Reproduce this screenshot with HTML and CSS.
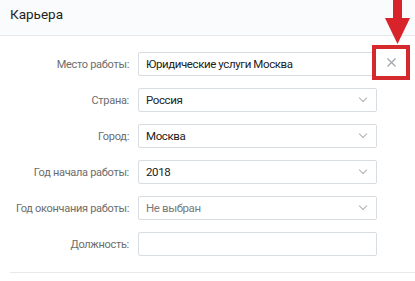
FILE: index.html
```html
<!DOCTYPE html>
<html lang="ru">
<head>
    <meta charset="UTF-8">
    <title>Карьера</title>
    <link rel="stylesheet" href="styles.css">
</head>
<body>
    <div class="page">
        <div class="header">Карьера</div>

        <div class="form">
            <div class="row">
                <div class="label">Место работы:</div>
                <div class="field">
                    <span class="value">Юридические услуги Москва</span>
                    <div class="clear-box">
                        <svg width="9" height="9" viewBox="0 0 9 9">
                            <path d="M0.5 0.5 L8.5 8.5 M8.5 0.5 L0.5 8.5" stroke="#9ea3aa" stroke-width="1.1" fill="none"/>
                        </svg>
                    </div>
                </div>
            </div>
            <div class="row">
                <div class="label">Страна:</div>
                <div class="field select"><span class="value">Россия</span><span class="chevron"></span></div>
            </div>
            <div class="row">
                <div class="label">Город:</div>
                <div class="field select"><span class="value">Москва</span><span class="chevron"></span></div>
            </div>
            <div class="row">
                <div class="label">Год начала работы:</div>
                <div class="field select"><span class="value">2018</span><span class="chevron"></span></div>
            </div>
            <div class="row">
                <div class="label">Год окончания работы:</div>
                <div class="field select"><span class="value muted">Не выбран</span><span class="chevron"></span></div>
            </div>
            <div class="row">
                <div class="label">Должность:</div>
                <div class="field"></div>
            </div>
        </div>

        <div class="divider"></div>

        <svg class="arrow" width="26" height="45" viewBox="0 0 26 45">
            <rect x="8" y="0" width="9" height="22" fill="#d8232a"/>
            <polygon points="0,18 25,18 12.5,44" fill="#d8232a"/>
        </svg>
    </div>
</body>
</html>
```

FILE: styles.css
```css
body {
    margin: 0;
    font-family: Roboto, "Liberation Sans", sans-serif;
    background: #fff;
}
.page {
    position: relative;
    width: 415px;
    height: 281px;
    overflow: hidden;
}
.header {
    height: 35px;
    line-height: 29px;
    padding-left: 10px;
    font-size: 13.5px;
    color: #222;
    background: #fafbfc;
    border-bottom: 1px solid #e7e8ec;
}
.form {
    padding-top: 16px;
    display: flex;
    flex-direction: column;
    gap: 12px;
}
.row {
    display: flex;
    align-items: center;
    gap: 9px;
}
.label {
    flex: none;
    width: 129px;
    text-align: right;
    white-space: nowrap;
    font-size: 11px;
    letter-spacing: -0.3px;
    color: #6d6d6d;
}
.field {
    position: relative;
    flex: none;
    width: 237px;
    height: 22px;
    border: 1px solid #d8dde2;
    border-radius: 2px;
    display: flex;
    align-items: center;
}
.value {
    padding-left: 7px;
    font-size: 11.5px;
    letter-spacing: -0.4px;
    color: #222;
}
.value.muted {
    color: #7a7a7a;
}
.chevron {
    position: absolute;
    right: 10px;
    top: 6px;
    width: 5px;
    height: 5px;
    border-right: 1px solid #b0b0b0;
    border-bottom: 1px solid #b0b0b0;
    transform: rotate(45deg);
}
.clear-box {
    position: absolute;
    left: 233px;
    top: -8px;
    width: 30px;
    height: 27px;
    border: 4px solid #d42a2e;
    background: #fff;
    display: flex;
    align-items: center;
    justify-content: center;
}
.divider {
    margin: 16px 0 0 10px;
    border-top: 1px solid #e7e8ec;
}
.arrow {
    position: absolute;
    left: 385px;
    top: 0;
}
```
